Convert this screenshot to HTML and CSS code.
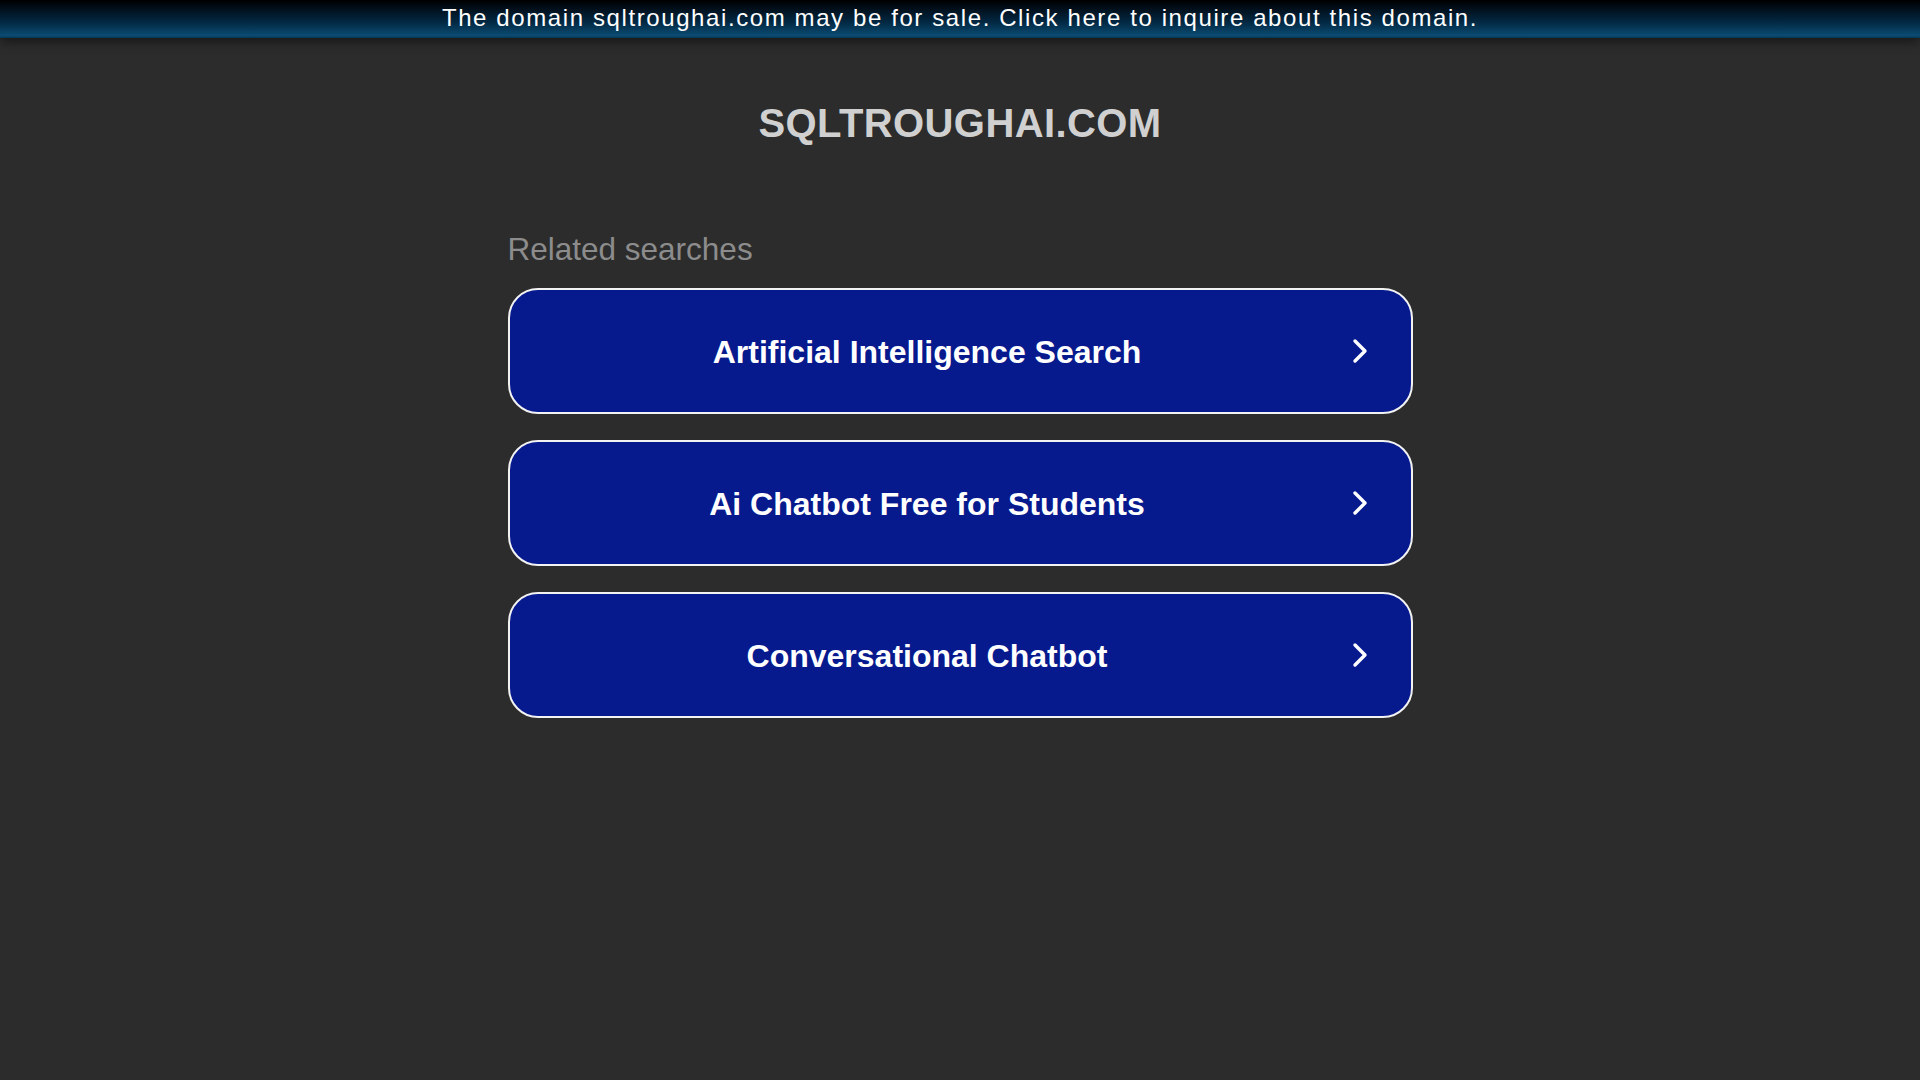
FILE: index.html
```html
<!DOCTYPE html>
<html lang="en">
<head>
<meta charset="utf-8">
<title>sqltroughai.com</title>
<link rel="stylesheet" href="styles.css">
</head>
<body>
<div class="banner">The domain sqltroughai.com may be for sale. Click here to inquire about this domain.</div>
<main class="content">
  <h1 class="domain">sqltroughai.com</h1>
  <section class="related">
    <h2 class="related-title">Related searches</h2>
    <ul class="links">
      <li><a class="link" href="#"><span class="link-text">Artificial Intelligence Search</span><svg class="chev" viewBox="0 0 16 26" width="16" height="26"><path d="M3 3 L13 13 L3 23" fill="none" stroke="#fff" stroke-width="3.4" stroke-linecap="round" stroke-linejoin="round"/></svg></a></li>
      <li><a class="link" href="#"><span class="link-text">Ai Chatbot Free for Students</span><svg class="chev" viewBox="0 0 16 26" width="16" height="26"><path d="M3 3 L13 13 L3 23" fill="none" stroke="#fff" stroke-width="3.4" stroke-linecap="round" stroke-linejoin="round"/></svg></a></li>
      <li><a class="link" href="#"><span class="link-text">Conversational Chatbot</span><svg class="chev" viewBox="0 0 16 26" width="16" height="26"><path d="M3 3 L13 13 L3 23" fill="none" stroke="#fff" stroke-width="3.4" stroke-linecap="round" stroke-linejoin="round"/></svg></a></li>
    </ul>
  </section>
</main>
</body>
</html>
```
FILE: styles.css
```css
html, body {
  margin: 0;
  padding: 0;
}
body {
  background: #2c2c2c;
  font-family: "Liberation Sans", Arial, sans-serif;
  min-height: 1080px;
}
.banner {
  height: 38px;
  line-height: 36px;
  text-align: center;
  color: #ffffff;
  font-size: 24px;
  letter-spacing: 1.6px;
  background: linear-gradient(to bottom, #000000 0%, #010d18 20%, #032a45 60%, #0b4c73 94%, #063450 100%);
  box-shadow: 0 3px 12px rgba(0, 0, 0, 0.55);
  position: relative;
}
.content {
  width: 905px;
  margin: 0 auto;
  padding-top: 61px;
}
.domain {
  margin: 0;
  text-align: center;
  text-transform: uppercase;
  font-size: 40px;
  line-height: 48px;
  font-weight: bold;
  color: #d0d0d0;
  letter-spacing: 0.4px;
}
.related {
  margin-top: 84px;
}
.related-title {
  margin: 0;
  font-size: 31.5px;
  line-height: 36px;
  font-weight: normal;
  color: #8c8c8c;
}
.links {
  list-style: none;
  margin: 21px 0 0;
  padding: 0;
  display: flex;
  flex-direction: column;
  gap: 26px;
}
.link {
  box-sizing: border-box;
  height: 126px;
  display: flex;
  align-items: center;
  border: 2px solid #f2f2f2;
  border-radius: 30px;
  background: #061a8e;
  text-decoration: none;
  color: #ffffff;
  padding-right: 43px;
}
.link-text {
  flex: 1;
  text-align: center;
  font-size: 32px;
  font-weight: bold;
  padding-top: 2px;
  margin-right: 7px;
}
.chev {
  display: block;
  flex: none;
}
```
